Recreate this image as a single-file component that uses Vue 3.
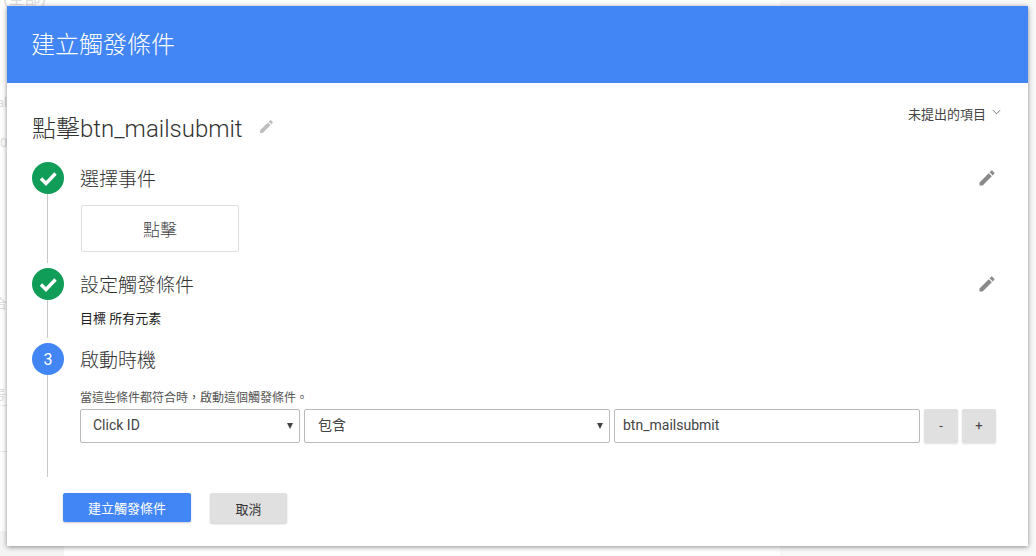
<script setup>
const steps = [
  { id: 1, title: '選擇事件', done: true },
  { id: 2, title: '設定觸發條件', done: true },
  { id: 3, title: '啟動時機', done: false },
]
const edit = 'M3 17.25V21h3.75L17.81 9.94l-3.75-3.75L3 17.25zM20.71 7.04c.39-.39.39-1.02 0-1.41l-2.34-2.34c-.39-.39-1.02-.39-1.41 0l-1.83 1.83 3.75 3.75 1.83-1.83z'
</script>

<template>
  <div class="page">
    <div class="backdrop" aria-hidden="true">
      <div class="bd-right"></div>
      <div class="bd-corner"></div>
      <div class="bd-rule bd-r1"></div>
      <div class="bd-rule bd-r2"></div>
      <span class="bd-text bd-1">(全部)</span>
      <span class="bd-text bd-2">al</span>
      <span class="bd-text bd-3">0</span>
      <span class="bd-text bd-4">合</span>
      <span class="bd-text bd-5">号</span>
    </div>
    <div class="dialog">
      <header class="head">建立觸發條件</header>
      <main class="body">
        <div class="title-row">
          <h1 class="name">點擊btn_mailsubmit</h1>
          <svg class="title-pen" viewBox="0 0 24 24"><path :d="edit" /></svg>
          <div class="unsent">
            <span>未提出的項目</span>
            <svg class="chev" viewBox="0 0 10 6"><path d="M1 1l4 4 4-4" /></svg>
          </div>
        </div>

        <section v-for="s in steps" :key="s.id" class="step" :class="'step-' + s.id">
          <div class="rail">
            <div class="dot" :class="{ done: s.done }">
              <svg v-if="s.done" class="check" viewBox="0 0 32 32"><path d="M9 16.5l5 5 9.5-10" /></svg>
              <span v-else>{{ s.id }}</span>
            </div>
            <div class="line"></div>
          </div>
          <div class="content">
            <div class="step-head">
              <h2 class="step-title">{{ s.title }}</h2>
              <svg v-if="s.done" class="pen" viewBox="0 0 24 24"><path :d="edit" /></svg>
            </div>
            <div v-if="s.id === 1" class="card">點擊</div>
            <div v-if="s.id === 2" class="target">目標 所有元素</div>
            <template v-if="s.id === 3">
              <p class="hint">當這些條件都符合時，啟動這個觸發條件。</p>
              <div class="cond">
                <div class="sel-wrap sel-a">
                  <select class="sel"><option>Click ID</option></select>
                  <i class="arrow"></i>
                </div>
                <div class="sel-wrap sel-b">
                  <select class="sel"><option>包含</option></select>
                  <i class="arrow"></i>
                </div>
                <input class="inp" value="btn_mailsubmit" />
                <button class="mini">-</button>
                <button class="mini">+</button>
              </div>
            </template>
          </div>
        </section>

        <footer class="actions">
          <button class="btn primary">建立觸發條件</button>
          <button class="btn cancel">取消</button>
        </footer>
      </main>
    </div>
  </div>
</template>

<style>
html, body { margin: 0; background: #fff; overflow: hidden; }
</style>

<style scoped>
.page {
  position: relative;
  width: 1036px; height: 556px; box-sizing: border-box; padding: 6px 8px 10px 7px;
  font-family: Roboto, "Noto Sans CJK TC", sans-serif; color: #333; overflow: hidden;
}
.backdrop { position: absolute; inset: 0; overflow: hidden; }
.bd-right { position: absolute; left: 780px; top: 0; right: 0; bottom: 0; background: #f8f8f8; }
.bd-corner { position: absolute; left: 0; top: 531px; width: 64px; bottom: 0; background: #f4f4f4; }
.bd-rule { position: absolute; left: 0; width: 7px; height: 1px; background: #ececec; }
.bd-r1 { top: 405px; }
.bd-r2 { top: 451px; }
.bd-text { position: absolute; font-size: 13px; line-height: 16px; color: #dcdcdc; }
.bd-1 { left: 3px; top: -9px; font-size: 16px; }
.bd-2 { left: -3px; top: 95px; }
.bd-3 { left: 0; top: 135px; }
.bd-4 { left: -6px; top: 296px; }
.bd-5 { left: -7px; top: 387px; }
.dialog {
  position: relative;
  height: 540px; background: #fff; box-shadow: 0 1px 5px rgba(0,0,0,.45);
}
.head {
  height: 77px; background: #4285f4; color: #fff; font-size: 24px; font-weight: 300;
  padding-left: 24px; line-height: 79px;
}
.body { padding: 0 32px 0 25px; }
.title-row { display: flex; align-items: center; height: 79px; position: relative; }
.name { margin: 8px 0 0; font-size: 24px; font-weight: 300; color: #333; }
.title-pen { width: 17px; height: 17px; margin: 7px 0 0 15px; fill: #bdbdbd; }
.unsent {
  position: absolute; right: -5px; top: 21px; display: flex; align-items: center; gap: 6px;
  font-size: 13px; color: #444;
}
.chev { width: 9px; height: 6px; margin-top: -3px; fill: none; stroke: #666; stroke-width: 1; }
.step { display: grid; grid-template-columns: 32px 1fr; column-gap: 16px; }
.step-1 { height: 106px; }
.step-2 { height: 75px; }
.step-3 { height: 134px; }
.rail { display: flex; flex-direction: column; align-items: center; }
.line { width: 1px; flex: 1; background: #c8c8c8; margin-right: 1px; }
.step-1 .line, .step-2 .line { margin-bottom: 5px; }
.dot {
  width: 32px; height: 32px; border-radius: 50%; background: #4285f4; color: #fff;
  display: flex; align-items: center; justify-content: center; font-size: 16px; flex: none;
}
.dot.done { background: #0f9d58; }
.check { width: 32px; height: 32px; fill: none; stroke: #fff; stroke-width: 3.4; }
.step-head { display: flex; align-items: center; justify-content: space-between; height: 32px; }
.step-title { margin: -2px 0 0; font-size: 19px; font-weight: 300; color: #333; }
.pen { width: 20px; height: 20px; fill: #8a8a8a; margin-right: -1px; }
.card {
  margin: 11px 0 0 1px; width: 156px; height: 45px; border: 1px solid #ddd; border-radius: 2px;
  display: flex; align-items: center; justify-content: center; font-size: 17px; font-weight: 300; color: #444;
}
.target { margin-top: 11px; font-size: 13px; line-height: 16px; color: #222; }
.hint { margin: 14px 0 0; font-size: 12px; line-height: 18px; color: #555; }
.cond { display: flex; gap: 4px; margin-top: 2px; height: 34px; }
.sel-wrap { position: relative; height: 34px; flex: none; }
.sel-a { width: 220px; }
.sel-b { width: 306px; }
.sel-a .sel { padding: 0 0 2px 12px; }
.sel-b .sel { padding: 0 0 2px 13px; }
.arrow {
  position: absolute; right: 7px; top: 14px; width: 0; height: 0; pointer-events: none;
  border-left: 3.5px solid transparent; border-right: 3.5px solid transparent; border-top: 6px solid #444;
}
.sel, .inp {
  box-sizing: border-box; height: 34px; border: 1px solid #bbb; border-radius: 2px; background: #fff;
  font-family: inherit; font-size: 14px; color: #444; margin: 0;
}
.sel { width: 100%; appearance: none; -webkit-appearance: none; outline: none; }
.inp { width: 306px; padding: 0 8px 2px; outline: none; }
.mini {
  width: 34px; height: 34px; border: 0; border-radius: 2px; background: #e0e0e0; color: #444;
  font-family: inherit; font-size: 13px; padding: 0 0 2px; box-shadow: 0 1px 2px rgba(0,0,0,.12);
}
.actions { display: flex; gap: 19px; margin: 16px 0 0 31px; }
.btn {
  height: 29px; border: 0; border-radius: 2px; font-family: inherit; font-size: 13px; padding: 0;
  box-shadow: 0 1px 2px rgba(0,0,0,.2);
}
.primary { width: 128px; background: #4285f4; color: #fff; }
.cancel { width: 77px; height: 30px; background: #e0e0e0; color: #333; }
</style>
